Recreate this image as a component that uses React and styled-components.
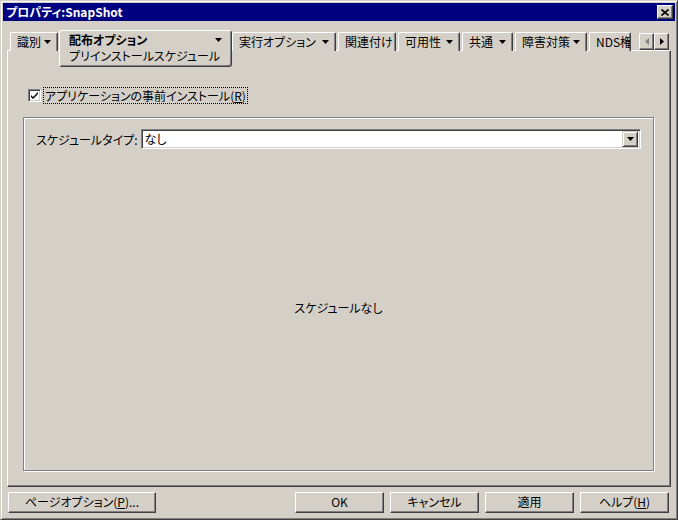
import React from 'react';
import styled, { createGlobalStyle } from 'styled-components';

const GlobalStyle = createGlobalStyle`
  html, body {
    margin: 0;
    padding: 0;
    background: #d4d0c8;
  }
  body {
    font-family: "Noto Sans CJK JP", "Liberation Sans", sans-serif;
    font-size: 12px;
    color: #000;
  }
  * {
    box-sizing: border-box;
  }
`;

const tabs = [
  { label: '識別', arrow: true, width: 48 },
  { label: '配布オプション', arrow: true, width: 173, active: true, sub: 'プリインストールスケジュール' },
  { label: '実行オプション', arrow: true, width: 104 },
  { label: '関連付け', width: 58 },
  { label: '可用性', arrow: true, width: 62 },
  { label: '共通', arrow: true, width: 51 },
  { label: '障害対策', arrow: true, width: 72 },
  { label: 'NDS権', width: 42, clipped: true },
];

const Window = styled.div`
  width: 678px;
  height: 520px;
  display: flex;
  flex-direction: column;
  padding: 1px;
  border: 1px solid;
  border-color: #d4d0c8 #404040 #404040 #d4d0c8;
  box-shadow: inset 1px 1px #fff, inset -1px -1px #808080;
  background: #d4d0c8;
  font-feature-settings: "palt";
`;

const TitleBar = styled.div`
  height: 18px;
  margin: 1px 1px 0 1px;
  background: #000080;
  display: flex;
  align-items: center;
  justify-content: space-between;
  padding: 0 2px 0 3px;
`;

const TitleText = styled.span`
  color: #fff;
  font-weight: bold;
  font-size: 12px;
  line-height: 18px;
`;

const CloseButton = styled.div`
  width: 16px;
  height: 14px;
  background: #d4d0c8;
  border: 1px solid;
  border-color: #fff #404040 #404040 #fff;
  box-shadow: inset -1px -1px #808080;
  display: flex;
  align-items: center;
  justify-content: center;
`;

const Body = styled.div`
  flex: 1;
  display: flex;
  flex-direction: column;
  padding: 9px 5px 5px 5px;
  min-height: 0;
`;

const TabStrip = styled.div`
  height: 20px;
  display: flex;
  align-items: flex-start;
  padding-left: 3px;
  gap: 2px;
  position: relative;
  z-index: 1;
`;

const Tab = styled.div`
  flex: none;
  width: ${(p) => p.$width}px;
  height: ${(p) => (p.$active ? 37 : 19)}px;
  margin-top: ${(p) => (p.$active ? 0 : 2)}px;
  margin-left: ${(p) => (p.$active ? -1 : 0)}px;
  margin-right: ${(p) => (p.$active ? -2 : 0)}px;
  background: #d4d0c8;
  border-top: 1px solid #fff;
  border-left: 1px solid #fff;
  border-right: 1px solid #404040;
  border-bottom: ${(p) => (p.$active ? '1px solid #404040' : 'none')};
  border-radius: ${(p) => (p.$active ? '3px' : '2px 2px 0 0')};
  box-shadow: ${(p) => (p.$active ? 'inset -1px -1px #808080' : 'inset -1px 0 #808080')};
  padding: ${(p) => (p.$active ? '1px 9px 0 9px' : '1px 6px 0 6px')};
  display: flex;
  flex-direction: column;
  overflow: hidden;
  white-space: nowrap;
`;

const TabHead = styled.div`
  display: flex;
  align-items: center;
  justify-content: space-between;
  height: 16px;
  line-height: 16px;
  font-weight: ${(p) => (p.$active ? 'bold' : 'normal')};
`;

const TabSub = styled.div`
  line-height: 16px;
  height: 16px;
`;

const Squiggle = styled.span`
  color: #808080;
  margin-left: 1px;
`;

const ScrollButtons = styled.div`
  margin-left: auto;
  margin-top: 3px;
  margin-right: 2px;
  display: flex;
`;

const ScrollButton = styled.div`
  width: 15px;
  height: 17px;
  background: #d4d0c8;
  border: 1px solid;
  border-color: #fff #404040 #404040 #fff;
  box-shadow: inset -1px -1px #808080;
  display: flex;
  align-items: center;
  justify-content: center;
`;

const Panel = styled.div`
  flex: 1;
  display: flex;
  flex-direction: column;
  border: 1px solid;
  border-color: #fff #404040 #404040 #fff;
  box-shadow: inset -1px -1px #808080;
  padding: 36px 16px 15px 15px;
  min-height: 0;
`;

const CheckRow = styled.label`
  display: flex;
  align-items: center;
  margin-left: 5px;
  height: 16px;
  gap: 3px;
`;

const CheckBox = styled.span`
  width: 13px;
  height: 13px;
  background: #fff;
  border: 1px solid;
  border-color: #808080 #fff #fff #808080;
  box-shadow: inset 1px 1px #404040, inset -1px -1px #d4d0c8;
  display: flex;
  align-items: center;
  justify-content: center;
`;

const FocusLabel = styled.span`
  outline: 1px dotted #000;
  padding: 0 1px;
  line-height: 15px;
`;

const GroupBox = styled.div`
  flex: 1;
  margin-top: 14px;
  border: 1px solid #808080;
  box-shadow: inset 1px 1px #fff, 1px 1px #fff;
  display: flex;
  flex-direction: column;
  padding: 11px 12px 0 12px;
`;

const FieldRow = styled.div`
  display: flex;
  align-items: center;
  gap: 3px;
`;

const Select = styled.div`
  flex: 1;
  height: 20px;
  background: #fff;
  border: 1px solid;
  border-color: #808080 #fff #fff #808080;
  box-shadow: inset 1px 1px #404040, inset -1px -1px #d4d0c8;
  display: flex;
  align-items: center;
  padding: 2px 2px 2px 3px;
`;

const SelectValue = styled.span`
  flex: 1;
  line-height: 16px;
`;

const SelectButton = styled.div`
  width: 16px;
  height: 16px;
  background: #d4d0c8;
  border: 1px solid;
  border-color: #d4d0c8 #404040 #404040 #d4d0c8;
  box-shadow: inset 1px 1px #fff, inset -1px -1px #808080;
  display: flex;
  align-items: center;
  justify-content: center;
`;

const EmptyText = styled.div`
  flex: 1;
  display: flex;
  align-items: center;
  justify-content: center;
  padding-bottom: 4px;
`;

const ButtonRow = styled.div`
  display: flex;
  gap: 6px;
  margin-top: 5px;
  padding: 0 2px 0 1px;
`;

const Button = styled.button`
  width: ${(p) => p.$width}px;
  height: 21px;
  margin-right: ${(p) => (p.$spacer ? 'auto' : '0')};
  background: #d4d0c8;
  border: 1px solid;
  border-color: #fff #404040 #404040 #fff;
  box-shadow: inset -1px -1px #808080;
  font: inherit;
  font-feature-settings: "palt";
  color: #000;
  padding: 0 0 2px 0;
  line-height: 15px;
`;

const Arrow = ({ color = '#000' }) => (
  <svg width="7" height="4" viewBox="0 0 7 4">
    <polygon points="0,0 7,0 3.5,4" fill={color} />
  </svg>
);

const SideArrow = ({ dir, color }) => (
  <svg width="4" height="7" viewBox="0 0 4 7">
    <polygon points={dir === 'left' ? '4,0 4,7 0,3.5' : '0,0 0,7 4,3.5'} fill={color} />
  </svg>
);

export default function App() {
  return (
    <>
      <GlobalStyle />
      <Window>
        <TitleBar>
          <TitleText>プロパティ:SnapShot</TitleText>
          <CloseButton>
            <svg width="8" height="7" viewBox="0 0 8 7">
              <path d="M0.5 0.5 L7.5 6.5 M7.5 0.5 L0.5 6.5" stroke="#000" strokeWidth="1.6" />
            </svg>
          </CloseButton>
        </TitleBar>
        <Body>
          <TabStrip>
            {tabs.map((t) => (
              <Tab key={t.label} $width={t.width} $active={t.active}>
                <TabHead $active={t.active}>
                  <span>
                    {t.label}
                    {t.clipped && <Squiggle>(</Squiggle>}
                  </span>
                  {t.arrow && <Arrow />}
                </TabHead>
                {t.sub && <TabSub>{t.sub}</TabSub>}
              </Tab>
            ))}
            <ScrollButtons>
              <ScrollButton>
                <SideArrow dir="left" color="#808080" />
              </ScrollButton>
              <ScrollButton>
                <SideArrow dir="right" color="#000" />
              </ScrollButton>
            </ScrollButtons>
          </TabStrip>
          <Panel>
            <CheckRow>
              <CheckBox>
                <svg width="7" height="7" viewBox="0 0 7 7">
                  <path d="M0 3 L0 5 L2 7 L7 2 L7 0 L2 5 Z" fill="#000" />
                </svg>
              </CheckBox>
              <FocusLabel>
                アプリケーションの事前インストール(<u>R</u>)
              </FocusLabel>
            </CheckRow>
            <GroupBox>
              <FieldRow>
                <span>スケジュールタイプ:</span>
                <Select>
                  <SelectValue>なし</SelectValue>
                  <SelectButton>
                    <Arrow />
                  </SelectButton>
                </Select>
              </FieldRow>
              <EmptyText>スケジュールなし</EmptyText>
            </GroupBox>
          </Panel>
          <ButtonRow>
            <Button $width={148} $spacer>
              ページオプション(<u>P</u>)...
            </Button>
            <Button $width={89}>OK</Button>
            <Button $width={89}>キャンセル</Button>
            <Button $width={89}>適用</Button>
            <Button $width={89}>
              ヘルプ(<u>H</u>)
            </Button>
          </ButtonRow>
        </Body>
      </Window>
    </>
  );
}
